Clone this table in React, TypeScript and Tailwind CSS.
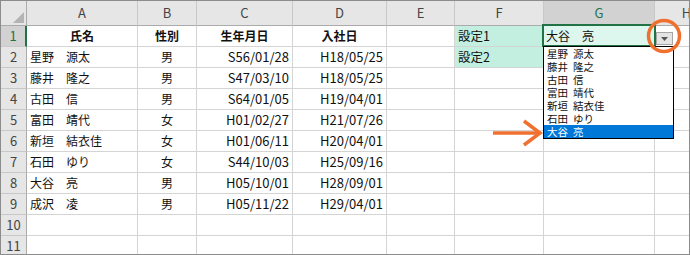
import React from 'react'

const cols = ['A', 'B', 'C', 'D', 'E', 'F', 'G', 'H']

const rows: string[][] = [
  ['氏名', '性別', '生年月日', '入社日', '', '設定1', '大谷　亮'],
  ['星野　源太', '男', 'S56/01/28', 'H18/05/25', '', '設定2'],
  ['藤井　隆之', '男', 'S47/03/10', 'H18/05/25'],
  ['古田　信', '男', 'S64/01/05', 'H19/04/01'],
  ['富田　靖代', '女', 'H01/02/27', 'H21/07/26'],
  ['新垣　結衣佳', '女', 'H01/06/11', 'H20/04/01'],
  ['石田　ゆり', '女', 'S44/10/03', 'H25/09/16'],
  ['大谷　亮', '男', 'H05/10/01', 'H28/09/01'],
  ['成沢　凌', '男', 'H05/11/22', 'H29/04/01'],
  [],
  [],
]

const listItems = [
  ['星野', '源太'],
  ['藤井', '隆之'],
  ['古田', '信'],
  ['富田', '靖代'],
  ['新垣', '結衣佳'],
  ['石田', 'ゆり'],
  ['大谷', '亮'],
]

function cellClass(r: number, c: number) {
  // c: 0 = A ... 7 = H
  let cls = 'h-[21px] border-r border-b border-[#d4d4d4] flex items-center overflow-hidden whitespace-nowrap '
  if (r === 0 && c < 4) cls += 'justify-center font-bold text-[12px] '
  else if (c === 0) cls += 'pl-[3px] text-[12px] '
  else if (c === 1) cls += 'justify-center text-[12px] '
  else if (c === 2 || c === 3) cls += 'justify-end pr-[3px] text-[13px] '
  if (c === 5 && r < 2) cls += 'bg-[#c3efe1] border-[#c3efe1] pl-[3px] text-[12.5px] '
  if (c === 6 && r === 0) cls += 'bg-[#ddf6ee] pl-[2px] text-[12px] '
  return cls
}

export default function App() {
  return (
    <div
      className="relative w-[690px] h-[255px] overflow-hidden border border-[#8c8c8c] bg-white text-[#111]"
      style={{ fontFamily: '"Noto Sans CJK JP", "Noto Sans", sans-serif' }}
    >
      <div className="grid grid-cols-[26px_111px_59px_96px_94px_68px_89px_111px_64px] w-max">
        {/* column header row */}
        <div className="relative h-[25px] bg-[#e6e6e6] border-r border-b border-[#ababab]">
          <svg className="absolute right-[2px] bottom-[2px]" width="11" height="11" viewBox="0 0 11 11">
            <polygon points="11,0 11,11 0,11" fill="#b4b4b4" />
          </svg>
        </div>
        {cols.map((c) => (
          <div
            key={c}
            className={`h-[25px] flex items-center justify-center text-[13px] border-r border-[#c8c8c8] ${
              c === 'G'
                ? 'bg-[#d2d2d2] text-[#217346] border-b-2 border-b-[#217346]'
                : 'bg-[#e6e6e6] text-[#444] border-b border-b-[#ababab]'
            }`}
          >
            {c}
          </div>
        ))}

        {rows.map((row, r) => (
          <React.Fragment key={r}>
            <div
              className={`h-[21px] flex items-center justify-center text-[13px] border-b border-[#c8c8c8] ${
                r === 0
                  ? 'bg-[#d2d2d2] text-[#217346] border-r-2 border-r-[#217346]'
                  : 'bg-[#e6e6e6] text-[#444] border-r border-r-[#ababab]'
              }`}
            >
              {r + 1}
            </div>
            {cols.map((_, c) => (
              <div key={c} className={cellClass(r, c)}>
                {row[c] ?? ''}
              </div>
            ))}
          </React.Fragment>
        ))}
      </div>

      {/* active cell G1 */}
      <div className="absolute left-[541px] top-[23px] w-[114px] h-[23px] border-2 border-[#217346]" />

      {/* dropdown button */}
      <div className="absolute left-[655px] top-[31px] w-[17px] h-[13px] bg-[#e4e4e4] border border-[#a6a6a6] flex items-center justify-center">
        <svg width="7" height="4" viewBox="0 0 7 4">
          <polygon points="0,0 7,0 3.5,4" fill="#555" />
        </svg>
      </div>

      {/* dropdown list */}
      <div className="absolute left-[542px] top-[45px] w-[131px] h-[93px] bg-white border border-black">
        {listItems.map(([a, b], i) => (
          <div
            key={i}
            className={`h-[13px] flex items-center gap-[5px] pl-[3px] text-[10.5px] leading-[13px] overflow-hidden ${
              i === listItems.length - 1 ? 'bg-[#0078d7] text-white' : 'text-[#111]'
            }`}
          >
            <span>{a}</span>
            <span>{b}</span>
          </div>
        ))}
      </div>

      {/* annotations */}
      <svg className="absolute inset-0 pointer-events-none" width="690" height="255">
        <circle cx="663" cy="35" r="15.5" fill="none" stroke="#f07030" strokeWidth="3.5" />
        <line x1="492" y1="132" x2="537" y2="132" stroke="#f07030" strokeWidth="3.5" />
        <polyline points="523,120 539,132 523,144" fill="none" stroke="#f07030" strokeWidth="3.5" />
      </svg>
    </div>
  )
}
